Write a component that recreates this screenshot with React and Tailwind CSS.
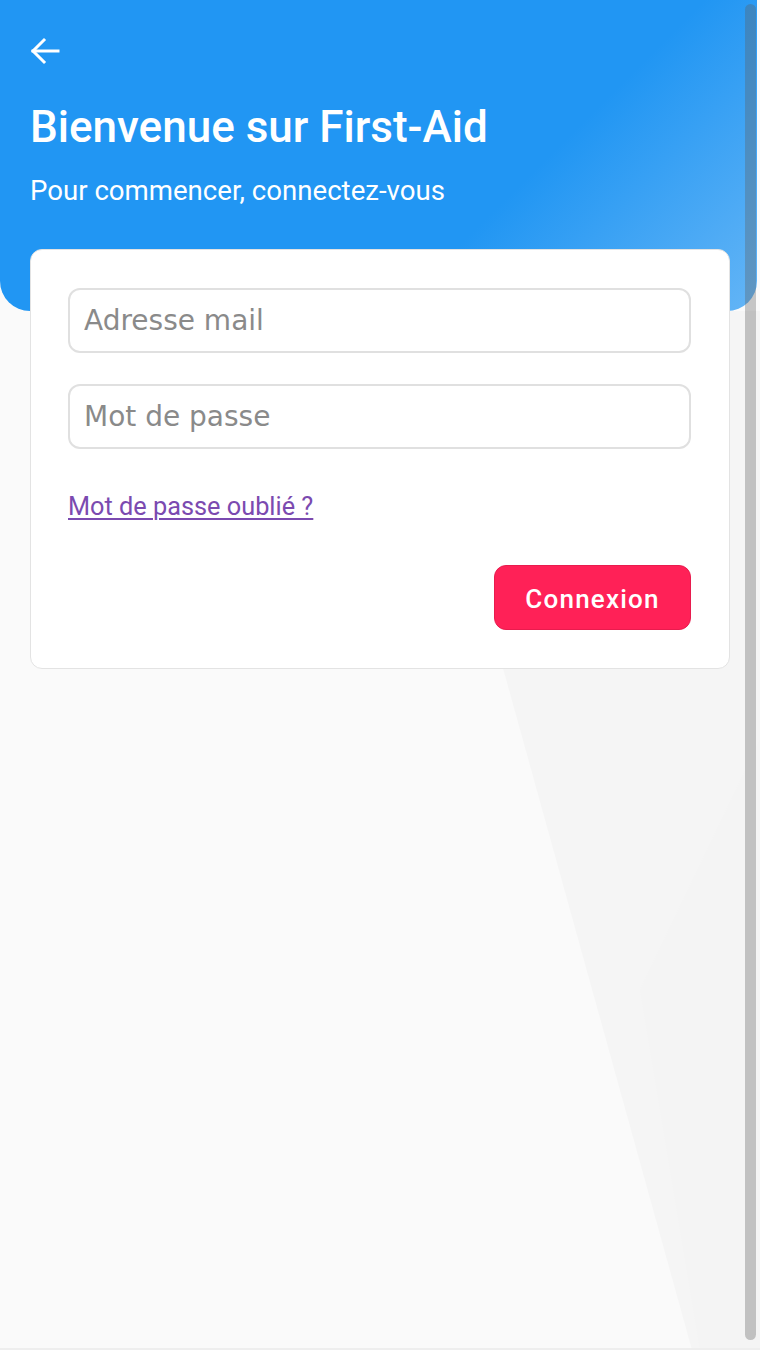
import React from 'react';

const BackArrow = () => (
  <svg width="30" height="28" viewBox="0 0 30 28" fill="none" stroke="white" strokeWidth="3" strokeLinecap="square">
    <line x1="3" y1="14" x2="28" y2="14" />
    <polyline points="14,3 3,14 14,25" strokeLinejoin="miter" />
  </svg>
);

const App = () => {
  return (
    <div className="relative min-h-[1350px] bg-[#fafafa] overflow-hidden font-['Roboto',sans-serif]">
      {/* decorative background shape */}
      <svg className="absolute inset-0 w-[760px] h-[1350px]" viewBox="0 0 760 1350">
        <polygon points="404,311 760,311 760,1350 692,1350" fill="#f5f5f5" />
        <polygon points="760,740 760,1350 700,1350 640,990" fill="#f4f4f4" />
      </svg>

      <div className="relative">
        <div className="h-[311px] mr-[3px] rounded-b-[30px] bg-[linear-gradient(135deg,#2196f3_66%,#64b5f6)] px-[30px] pt-[37px]">
          <button className="block">
            <BackArrow />
          </button>
          <h1 className="mt-[36px] text-[44px] leading-[52px] font-medium text-white">Bienvenue sur First-Aid</h1>
          <p className="mt-[22px] text-[27.6px] leading-[32px] text-white">Pour commencer, connectez-vous</p>
        </div>

        <div className="relative mx-[30px] -mt-[62px] bg-white border border-[#e3e3e3] rounded-[12px] pl-[37px] pr-[38px] pt-[38px] pb-[38px]">
          <input
            type="email"
            placeholder="Adresse mail"
            className="block w-full h-[65px] rounded-[12px] border-2 border-[#e0e0e0] bg-white px-[14px] text-[28px] font-['DejaVu_Sans',sans-serif] text-[#333] placeholder:text-[#8a8a8a] outline-none"
          />
          <input
            type="password"
            placeholder="Mot de passe"
            className="mt-[31px] block w-full h-[65px] rounded-[12px] border-2 border-[#e0e0e0] bg-white px-[14px] text-[28px] font-['DejaVu_Sans',sans-serif] text-[#333] placeholder:text-[#8a8a8a] outline-none"
          />
          <div className="mt-[43px]">
            <a href="#" className="text-[25.3px] leading-[30px] text-[#7b4ab0] underline underline-offset-[3px] decoration-[2px]">Mot de passe oublié ?</a>
          </div>
          <div className="mt-[43px] flex justify-end">
            <button className="w-[197px] h-[65px] pt-[3px] rounded-[12px] bg-[#ff2157] border border-[#e81c4e] text-white text-[26px] font-medium tracking-[1.2px]">
              Connexion
            </button>
          </div>
        </div>
      </div>

      {/* overlay scrollbar */}
      <div className="absolute right-[4px] top-[4px] w-[11px] h-[1336px] rounded-full bg-[rgba(93,93,93,0.34)]" />
      <div className="absolute left-0 right-0 bottom-0 h-[2px] bg-[#eeeeee]" />
    </div>
  );
};

export default App;
